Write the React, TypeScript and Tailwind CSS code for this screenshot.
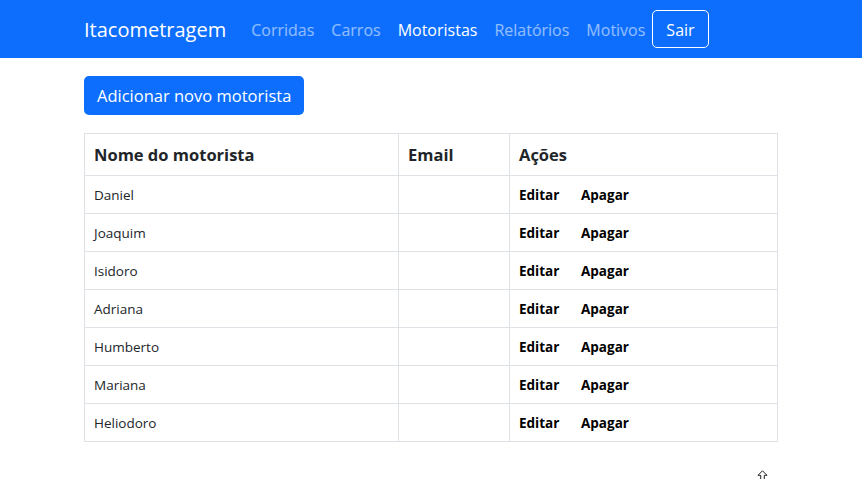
import React from "react";

const drivers = ["Daniel", "Joaquim", "Isidoro", "Adriana", "Humberto", "Mariana", "Heliodoro"];

export default function App() {
  return (
    <div className="relative min-h-[479px] bg-white text-[#212529]" style={{ fontFamily: '"Open Sans", "Noto Sans", sans-serif' }}>
      <nav className="h-[58px] bg-[#0d6efd]">
        <div className="mx-auto flex h-full w-[720px] items-center px-3 pt-[1px]">
          <span className="mr-[25px] pl-px text-[20px] text-white">Itacometragem</span>
          <div className="flex items-center gap-[17px] text-[16px]">
            <span className="text-white/55">Corridas</span>
            <span className="text-white/55">Carros</span>
            <span className="text-white">Motoristas</span>
            <span className="text-white/55">Relatórios</span>
            <span className="text-white/55">Motivos</span>
          </div>
          <button className="ml-[7px] mb-px h-[38px] rounded-[5px] border border-white px-[13px] pt-px text-[16px] text-white">Sair</button>
        </div>
      </nav>
      <div className="mx-auto w-[720px] px-3 pt-[18px]">
        <button className="ml-px h-[39px] rounded-[5px] bg-[#0d6efd] px-[13px] pt-[2px] text-[16.5px] text-white">Adicionar novo motorista</button>
        <table className="mt-[18px] ml-px w-[694px] border-collapse border border-[#dee2e6]">
          <thead>
            <tr className="h-[42px]">
              <th className="w-[314px] border border-[#dee2e6] px-[9px] pt-[2px] text-left text-[16.5px] font-bold">Nome do motorista</th>
              <th className="w-[111px] border border-[#dee2e6] px-[9px] pt-[2px] text-left text-[16.5px] font-bold">Email</th>
              <th className="border border-[#dee2e6] px-[9px] pt-[2px] text-left text-[16.5px] font-bold">Ações</th>
            </tr>
          </thead>
          <tbody>
            {drivers.map((d) => (
              <tr key={d} className="h-[38px]">
                <td className="border border-[#dee2e6] px-[9px] pt-[2px] text-[13.5px]">{d}</td>
                <td className="border border-[#dee2e6] px-[9px]"></td>
                <td className="border border-[#dee2e6] px-[9px] pt-[2px] text-[13.5px] font-bold text-black">
                  <span className="inline-block w-[62px]">Editar</span>
                  <span>Apagar</span>
                </td>
              </tr>
            ))}
          </tbody>
        </table>
      </div>
      <svg className="absolute left-[757px] top-[470px]" width="11" height="11" viewBox="0 0 11 11">
        <path d="M5.5 0.8 L10 5.3 L7.3 5.3 L7.3 9.5 L3.7 9.5 L3.7 5.3 L1 5.3 Z" fill="white" stroke="#222" strokeWidth="1" strokeLinejoin="miter" />
      </svg>
    </div>
  );
}
